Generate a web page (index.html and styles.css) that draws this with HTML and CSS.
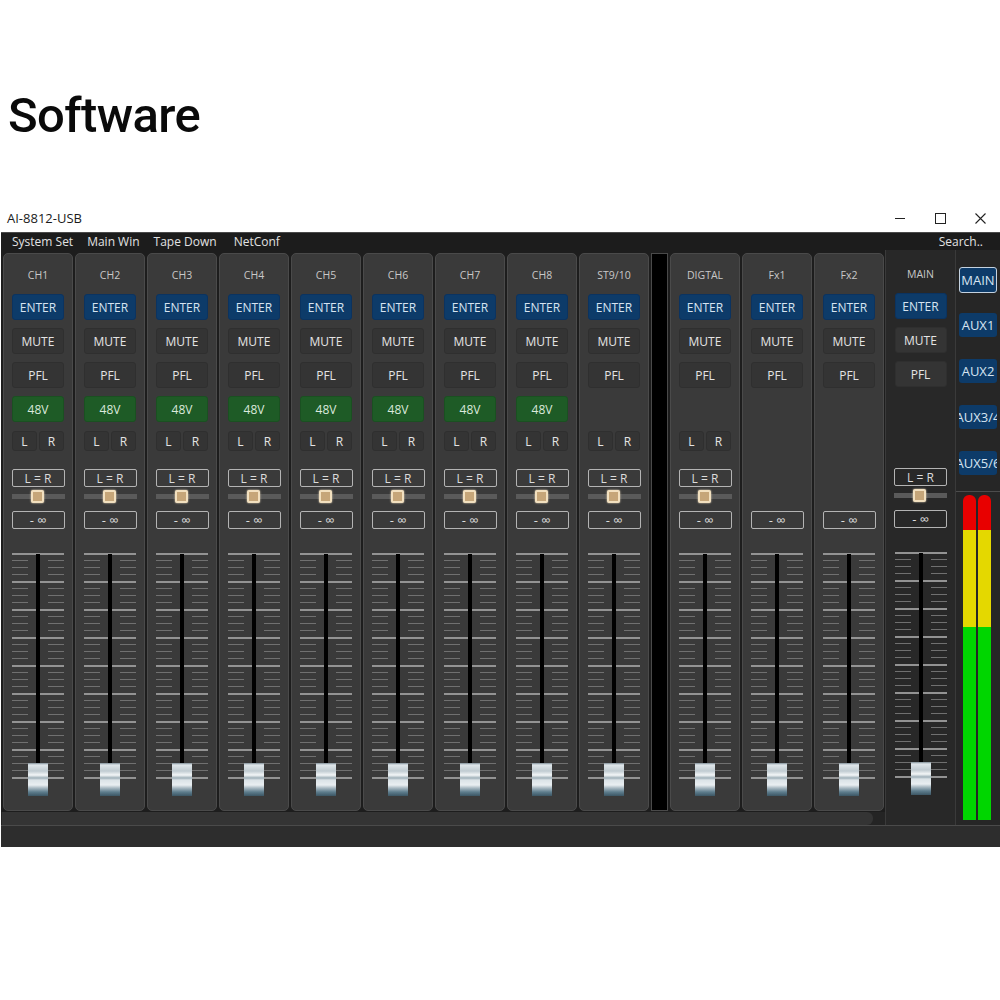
FILE: index.html
```html
<!DOCTYPE html>
<html>
<head>
  <meta charset="utf-8">
  <title>Software</title>
  <link rel="stylesheet" href="styles.css">
</head>
<body>
<h1 class="page-title">Software</h1>

<div class="window">
  <div class="titlebar">
    <span class="app-name">AI-8812-USB</span>
    <span class="winbtn"><svg width="10" height="10" viewBox="0 0 10 10"><path d="M0 5.5H10" stroke="#222" stroke-width="1"/></svg></span>
    <span class="winbtn"><svg width="11" height="11" viewBox="0 0 11 11"><rect x="0.5" y="0.5" width="10" height="10" fill="none" stroke="#222" stroke-width="1"/></svg></span>
    <span class="winbtn"><svg width="11" height="11" viewBox="0 0 11 11"><path d="M0.5 0.5L10.5 10.5M10.5 0.5L0.5 10.5" stroke="#222" stroke-width="1.1"/></svg></span>
  </div>

  <div class="menubar">
    <span class="menu">System Set</span>
    <span class="menu">Main Win</span>
    <span class="menu">Tape Down</span>
    <span class="menu net">NetConf</span>
    <span class="search">Search..</span>
  </div>

  <div class="mixer">
    <div class="left">
      <div class="strips">
        <!-- mic channels -->
        <div class="strip">
          <div class="name">CH1</div>
          <div class="btn enter">ENTER</div>
          <div class="btn">MUTE</div>
          <div class="btn">PFL</div>
          <div class="btn phantom">48V</div>
          <div class="lr"><span class="btn">L</span><span class="btn">R</span></div>
          <div class="box bal">L = R</div>
          <div class="pan"><span class="knob"></span></div>
          <div class="box inf">- ∞</div>
          <div class="fader"><div class="slot"></div><div class="cap"></div></div>
        </div>
        <div class="strip">
          <div class="name">CH2</div>
          <div class="btn enter">ENTER</div>
          <div class="btn">MUTE</div>
          <div class="btn">PFL</div>
          <div class="btn phantom">48V</div>
          <div class="lr"><span class="btn">L</span><span class="btn">R</span></div>
          <div class="box bal">L = R</div>
          <div class="pan"><span class="knob"></span></div>
          <div class="box inf">- ∞</div>
          <div class="fader"><div class="slot"></div><div class="cap"></div></div>
        </div>
        <div class="strip">
          <div class="name">CH3</div>
          <div class="btn enter">ENTER</div>
          <div class="btn">MUTE</div>
          <div class="btn">PFL</div>
          <div class="btn phantom">48V</div>
          <div class="lr"><span class="btn">L</span><span class="btn">R</span></div>
          <div class="box bal">L = R</div>
          <div class="pan"><span class="knob"></span></div>
          <div class="box inf">- ∞</div>
          <div class="fader"><div class="slot"></div><div class="cap"></div></div>
        </div>
        <div class="strip">
          <div class="name">CH4</div>
          <div class="btn enter">ENTER</div>
          <div class="btn">MUTE</div>
          <div class="btn">PFL</div>
          <div class="btn phantom">48V</div>
          <div class="lr"><span class="btn">L</span><span class="btn">R</span></div>
          <div class="box bal">L = R</div>
          <div class="pan"><span class="knob"></span></div>
          <div class="box inf">- ∞</div>
          <div class="fader"><div class="slot"></div><div class="cap"></div></div>
        </div>
        <div class="strip">
          <div class="name">CH5</div>
          <div class="btn enter">ENTER</div>
          <div class="btn">MUTE</div>
          <div class="btn">PFL</div>
          <div class="btn phantom">48V</div>
          <div class="lr"><span class="btn">L</span><span class="btn">R</span></div>
          <div class="box bal">L = R</div>
          <div class="pan"><span class="knob"></span></div>
          <div class="box inf">- ∞</div>
          <div class="fader"><div class="slot"></div><div class="cap"></div></div>
        </div>
        <div class="strip">
          <div class="name">CH6</div>
          <div class="btn enter">ENTER</div>
          <div class="btn">MUTE</div>
          <div class="btn">PFL</div>
          <div class="btn phantom">48V</div>
          <div class="lr"><span class="btn">L</span><span class="btn">R</span></div>
          <div class="box bal">L = R</div>
          <div class="pan"><span class="knob"></span></div>
          <div class="box inf">- ∞</div>
          <div class="fader"><div class="slot"></div><div class="cap"></div></div>
        </div>
        <div class="strip">
          <div class="name">CH7</div>
          <div class="btn enter">ENTER</div>
          <div class="btn">MUTE</div>
          <div class="btn">PFL</div>
          <div class="btn phantom">48V</div>
          <div class="lr"><span class="btn">L</span><span class="btn">R</span></div>
          <div class="box bal">L = R</div>
          <div class="pan"><span class="knob"></span></div>
          <div class="box inf">- ∞</div>
          <div class="fader"><div class="slot"></div><div class="cap"></div></div>
        </div>
        <div class="strip">
          <div class="name">CH8</div>
          <div class="btn enter">ENTER</div>
          <div class="btn">MUTE</div>
          <div class="btn">PFL</div>
          <div class="btn phantom">48V</div>
          <div class="lr"><span class="btn">L</span><span class="btn">R</span></div>
          <div class="box bal">L = R</div>
          <div class="pan"><span class="knob"></span></div>
          <div class="box inf">- ∞</div>
          <div class="fader"><div class="slot"></div><div class="cap"></div></div>
        </div>
        <!-- stereo channel -->
        <div class="strip">
          <div class="name">ST9/10</div>
          <div class="btn enter">ENTER</div>
          <div class="btn">MUTE</div>
          <div class="btn">PFL</div>
          <div class="btn off">48V</div>
          <div class="lr"><span class="btn">L</span><span class="btn">R</span></div>
          <div class="box bal">L = R</div>
          <div class="pan"><span class="knob"></span></div>
          <div class="box inf">- ∞</div>
          <div class="fader"><div class="slot"></div><div class="cap"></div></div>
        </div>

        <div class="divider"></div>

        <!-- returns -->
        <div class="strip">
          <div class="name">DIGTAL</div>
          <div class="btn enter">ENTER</div>
          <div class="btn">MUTE</div>
          <div class="btn">PFL</div>
          <div class="btn off">48V</div>
          <div class="lr"><span class="btn">L</span><span class="btn">R</span></div>
          <div class="box bal">L = R</div>
          <div class="pan"><span class="knob"></span></div>
          <div class="box inf">- ∞</div>
          <div class="fader"><div class="slot"></div><div class="cap"></div></div>
        </div>
        <div class="strip">
          <div class="name">Fx1</div>
          <div class="btn enter">ENTER</div>
          <div class="btn">MUTE</div>
          <div class="btn">PFL</div>
          <div class="btn off">48V</div>
          <div class="lr off"><span class="btn">L</span><span class="btn">R</span></div>
          <div class="box bal off">L = R</div>
          <div class="pan off"><span class="knob"></span></div>
          <div class="box inf">- ∞</div>
          <div class="fader"><div class="slot"></div><div class="cap"></div></div>
        </div>
        <div class="strip">
          <div class="name">Fx2</div>
          <div class="btn enter">ENTER</div>
          <div class="btn">MUTE</div>
          <div class="btn">PFL</div>
          <div class="btn off">48V</div>
          <div class="lr off"><span class="btn">L</span><span class="btn">R</span></div>
          <div class="box bal off">L = R</div>
          <div class="pan off"><span class="knob"></span></div>
          <div class="box inf">- ∞</div>
          <div class="fader"><div class="slot"></div><div class="cap"></div></div>
        </div>
      </div>
      <div class="scroll"><div class="thumb"></div></div>
    </div>

    <!-- master -->
    <div class="master">
      <div class="name">MAIN</div>
      <div class="btn enter">ENTER</div>
      <div class="btn">MUTE</div>
      <div class="btn">PFL</div>
      <div class="btn off">48V</div>
      <div class="lr off"><span class="btn">L</span><span class="btn">R</span></div>
      <div class="box bal">L = R</div>
      <div class="pan"><span class="knob"></span></div>
      <div class="box inf">- ∞</div>
      <div class="fader"><div class="slot"></div><div class="cap"></div></div>
    </div>

    <div class="side">
      <div class="sbtn selected">MAIN</div>
      <div class="sbtn">AUX1</div>
      <div class="sbtn">AUX2</div>
      <div class="sbtn">AUX3/4</div>
      <div class="sbtn">AUX5/6</div>
      <div class="meters">
        <div class="meter"></div>
        <div class="meter"></div>
      </div>
    </div>
  </div>

  <div class="status"></div>
</div>
</body>
</html>
```

FILE: styles.css
```css
body {margin:0; background:#fff; font-family:"Open Sans", "DejaVu Sans", sans-serif;}

.page-title {margin:0; padding:88px 0 0 8px; font:500 49px/56px Roboto, "Liberation Sans", sans-serif; letter-spacing:-0.6px; color:#0a0a0a;}

.window {margin:60px 0 0 1px; width:999px;}

.titlebar {height:28px; display:flex; align-items:center; padding-left:6px; font-size:13px; color:#1a1a1a;}
.titlebar .app-name {flex:1;}
.winbtn {width:40px; height:28px; display:flex; align-items:center; justify-content:center;}

.menubar {height:17px; border-top:1px solid #4a4a4a; background:#1c1c1c; color:#e2e2e2; font-size:12px; display:flex; align-items:center; padding-left:11px;}
.menu {margin-right:14px;}
.menu.net {margin-left:3px;}
.search {margin-left:auto; margin-right:17px;}

.mixer {display:flex; height:575px; background:#1d1d1d;}
.left {width:884px; display:flex; flex-direction:column;}
.strips {display:flex; gap:2px; padding:3px 0 0 2px;}

.strip {width:70px; height:558px; box-sizing:border-box; border:1px solid #4a4a4a; border-radius:5px; background:#3a3a3a; display:flex; flex-direction:column; align-items:center; padding-top:14px;}
.divider {width:17px; height:558px; box-sizing:border-box; background:#000; border:1px solid #4a4a4a;}

.name {height:14px; line-height:14px; font-size:10.5px; color:#c8c8c8;}

.btn {width:52px; height:26px; box-sizing:border-box; margin-top:8px; border:1px solid #2f2f2f; border-radius:3px; background:#343434; color:#e4e4e4; font-size:12px; display:flex; align-items:center; justify-content:center;}
.btn.enter {margin-top:12px; border-color:#0b3360; background:#0d3b69; color:#d6e4f1;}
.btn.phantom {border-color:#1a5021; background:#1e5b26; color:#dbe9dc;}
.off {visibility:hidden;}

.lr {width:52px; height:20px; margin-top:9px; display:flex; gap:2px;}
.lr .btn {width:25px; height:20px; margin:0;}

.box {width:53px; height:18px; box-sizing:border-box; border:1px solid #b4b4b4; border-radius:2px; color:#dcdcdc; font-size:12px; display:flex; align-items:center; justify-content:center; white-space:pre;}
.box.bal {margin-top:18px;}
.box.inf {margin-top:8px; font-size:13px;}

.pan {width:53px; height:13px; margin-top:3px; display:flex; align-items:center; justify-content:center; background:linear-gradient(transparent 4px, #5a5a5a 4px 9px, transparent 9px);}
.knob {width:9px; height:9px; margin-left:-2px; background:#c6a679; border:2px solid #f2e0bf; border-radius:2px; box-shadow:0 0 2px #f6e7c9;}

.fader {position:relative; width:52px; height:228px; margin-top:24px; display:flex; justify-content:center;
  background:
    repeating-linear-gradient(#939393 0 2px, transparent 2px 28px),
    repeating-linear-gradient(#707070 0 1px, transparent 1px 7px) left top / 16px 100% no-repeat,
    repeating-linear-gradient(#707070 0 1px, transparent 1px 7px) right top / 16px 100% no-repeat;}
.slot {width:4px; height:211px; margin-top:1px; background:#000;}
.cap {position:absolute; left:16px; top:210px; width:20px; height:33px;
  background:linear-gradient(#7f8e97 0, #dfe6ea 2px, #c0cbd1 8px, #f3f6f7 12px, #9fb0b9 15px, #dbe3e7 17px, #e9eef1 22px, #a9b9c2 25px, #5e7d8d 29px, #3c5664 33px);}

.scroll {margin-top:1px; height:13px; background:#242424; display:flex;}
.thumb {width:871px; margin-left:1px; background:#343434; border-radius:0 6px 6px 0;}

.master {width:71px; box-sizing:border-box; border-left:1px solid #3a3a3a; border-right:1px solid #3a3a3a; background:#282828; display:flex; flex-direction:column; align-items:center; padding-top:17px;}

.side {width:44px; background:#262626; display:flex; flex-direction:column;}
.sbtn {width:38px; height:24px; box-sizing:border-box; margin:22px 0 0 3px; border-radius:3px; background:#0d3b69; color:#d6e4f1; font-size:13px; display:flex; align-items:center; justify-content:center; white-space:nowrap; overflow:hidden;}
.sbtn.selected {height:26px; margin-top:17px; border:1.5px solid #c4d2e0;}
.sbtn.selected + .sbtn {margin-top:20px;}

.meters {margin-top:16px; border-top:1px solid #4c4c4c; padding:3px 0 0 7px; display:flex; gap:2px;}
.meter {width:13px; height:325px; border-radius:6px 6px 0 0; background:linear-gradient(#e80000 0 35px, #e4d800 35px 132px, #00d600 132px);}

.status {height:21px; border-top:1px solid #4a4a4a; background:#2d2d2d;}
```
